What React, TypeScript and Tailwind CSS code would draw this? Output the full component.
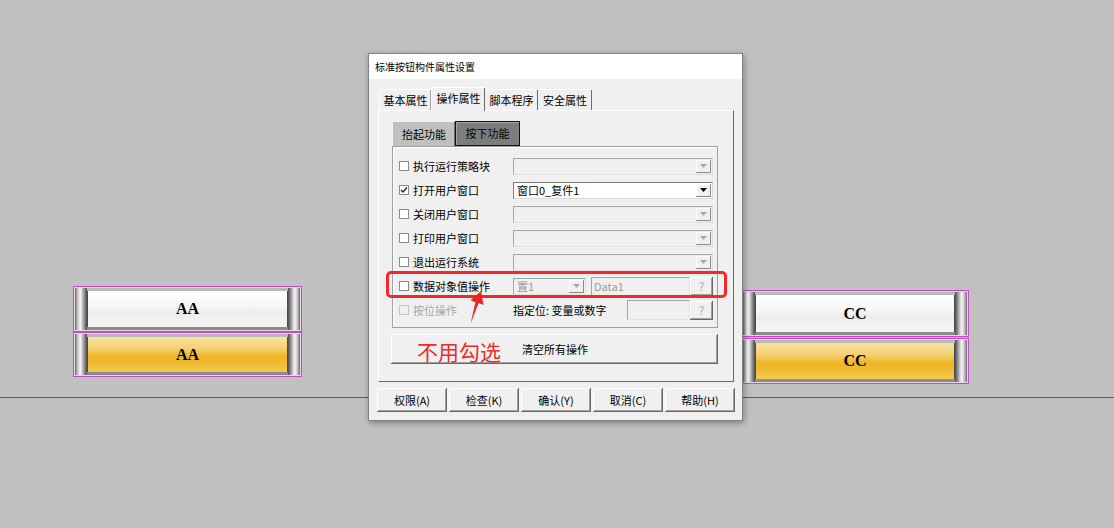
const cjk = "font-['Noto_Sans_CJK_SC','Noto_Sans',sans-serif]"

function MetalButton({ label, gold, h }: { label: string; gold?: boolean; h: string }) {
  return (
    <div className={`${h} border border-[#c848c8] bg-[#e9d3e9] p-px`}>
      <div className="flex h-full bg-[linear-gradient(180deg,#bcbcbc,#8a8a8a)]">
        <div className="w-[12px] bg-[linear-gradient(90deg,#6a6a6a_0%,#cfcfcf_25%,#f5f5f5_45%,#a8a8a8_70%,#4c4c4c_100%)]" />
        <div
          className={
            gold
              ? "my-[3px] flex flex-1 items-center justify-center border-x border-[#4a4a4a] bg-[linear-gradient(180deg,#f9e3a4_0%,#f4cf6e_35%,#efb524_55%,#f0bb32_75%,#f4c952_100%)] font-['Liberation_Serif',serif] text-[16px] font-bold text-black"
              : "my-[3px] flex flex-1 items-center justify-center border-x border-[#4a4a4a] bg-[linear-gradient(180deg,#ffffff_0%,#f7f7f7_40%,#ececec_60%,#f6f6f6_100%)] font-['Liberation_Serif',serif] text-[16px] font-bold text-black"
          }
        >
          {label}
        </div>
        <div className="w-[12px] bg-[linear-gradient(90deg,#4c4c4c_0%,#a8a8a8_30%,#f5f5f5_55%,#cfcfcf_75%,#6a6a6a_100%)]" />
      </div>
    </div>
  )
}

function CheckBox({ checked, disabled }: { checked?: boolean; disabled?: boolean }) {
  return (
    <div
      className={
        disabled
          ? 'flex h-[10px] w-[10px] shrink-0 items-center justify-center border border-[#c4c4c4] bg-[#f0f0f0]'
          : 'flex h-[10px] w-[10px] shrink-0 items-center justify-center border border-[#8a8a8a] bg-white'
      }
    >
      {checked && (
        <svg width="8" height="8" viewBox="0 0 8 8">
          <polyline points="1,4 3,6 7,1.5" fill="none" stroke="#222" strokeWidth="1.4" />
        </svg>
      )}
    </div>
  )
}

function Arrow({ enabled }: { enabled?: boolean }) {
  return (
    <div className="flex h-full w-[15px] items-center justify-center bg-[#f0f0f0] shadow-[inset_-1px_-1px_#8a8a8a,inset_1px_1px_#ffffff]">
      <svg width="7" height="4" viewBox="0 0 7 4">
        <polygon points="0,0 7,0 3.5,4" fill={enabled ? '#000' : '#a8a8a8'} />
      </svg>
    </div>
  )
}

function Combo({ w, text, enabled }: { w: string; text?: string; enabled?: boolean }) {
  return (
    <div
      className={
        enabled
          ? `${w} flex h-[17px] items-center border border-[#7a7a7a] border-r-[#d8d8d8] border-b-[#d8d8d8] bg-white p-px`
          : `${w} flex h-[17px] items-center border border-[#a6a6a6] border-r-[#e2e2e2] border-b-[#e2e2e2] bg-[#f0f0f0] p-px`
      }
    >
      <div className={enabled ? 'flex-1 pl-[2px] text-[11px] leading-[14px] text-black' : 'flex-1 pl-[2px] text-[11px] leading-[14px] text-[#9a9a9a]'}>
        {text}
      </div>
      <Arrow enabled={enabled} />
    </div>
  )
}

function QButton() {
  return (
    <div className="flex h-[19px] w-[23px] items-center justify-center bg-[#f0f0f0] text-[11px] text-[#a8a8a8] shadow-[inset_-1px_-1px_#696969,inset_1px_1px_#ffffff,inset_-2px_-2px_#a0a0a0]">
      ?
    </div>
  )
}

const rows = [
  { label: '执行运行策略块' },
  { label: '打开用户窗口', checked: true, value: '窗口0_复件1', enabled: true },
  { label: '关闭用户窗口' },
  { label: '打印用户窗口' },
  { label: '退出运行系统' },
]

function DialogButton({ children }: { children: string }) {
  return (
    <div className="flex h-[24px] w-[70px] items-center justify-center bg-[#f0f0f0] text-[11px] text-black shadow-[inset_-1px_-1px_#696969,inset_1px_1px_#ffffff,inset_-2px_-2px_#a0a0a0]">
      {children}
    </div>
  )
}

export default function App() {
  return (
    <div className={`relative h-[528px] w-[1114px] overflow-hidden bg-[#c0c0c0] ${cjk}`}>
      {/* canvas guide line */}
      <div className="absolute left-0 top-[397px] h-px w-full bg-[#5a5a5a]" />

      {/* AA widget */}
      <div className="absolute left-[73px] top-[286px] flex w-[229px] flex-col">
        <MetalButton label="AA" h="h-[46px]" />
        <MetalButton label="AA" gold h="h-[45px]" />
      </div>

      {/* CC widget */}
      <div className="absolute left-[741px] top-[290px] flex w-[228px] flex-col gap-px">
        <MetalButton label="CC" h="h-[47px]" />
        <MetalButton label="CC" gold h="h-[46px]" />
      </div>

      {/* property dialog */}
      <div className="absolute left-[368px] top-[53px] z-10 flex h-[368px] w-[375px] flex-col border border-[#828282] bg-[#f0f0f0] shadow-[1px_2px_6px_rgba(0,0,0,0.35)]">
        <div className="h-[25px] shrink-0 bg-white pl-[6px] text-[10px] leading-[25px] text-black">标准按钮构件属性设置</div>

        <div className="flex flex-col pl-[9px] pt-[8px]">
          <div className="flex h-[23px] items-end pl-px text-[11px] text-black">
            <div className="flex h-[21px] w-[52px] items-center justify-center border-l border-t border-white shadow-[inset_-1px_0_#a0a0a0]">基本属性</div>
            <div className="relative z-10 mb-[-1px] flex h-[24px] w-[54px] items-center justify-center border-l border-t border-white bg-[#f0f0f0] pb-[2px] shadow-[inset_-1px_0_#696969]">操作属性</div>
            <div className="flex h-[21px] w-[53px] items-center justify-center border-t border-white shadow-[inset_-1px_0_#696969]">脚本程序</div>
            <div className="flex h-[21px] w-[54px] items-center justify-center border-t border-white shadow-[inset_-1px_0_#696969]">安全属性</div>
          </div>

          <div className="flex h-[272px] w-[356px] flex-col border border-white border-b-[#696969] border-r-[#696969] pl-[13px] pt-[10px]">
            <div className="flex h-[25px] text-[11px] text-black">
              <div className="flex w-[63px] items-center justify-center border-l border-t border-[#f4f4f4] bg-[#c0c0c0] shadow-[inset_-1px_0_#6e6e6e]">抬起功能</div>
              <div className="flex w-[65px] items-center justify-center border border-[#111] bg-[#7d7d7d] shadow-[inset_1px_1px_#a5a5a5]">按下功能</div>
            </div>

            <div className="flex h-[182px] w-[326px] flex-col border border-[#a0a0a0] pb-[5px] pl-[6px] pt-[7px] shadow-[inset_1px_1px_#ffffff]">
              {rows.map((r) => (
                <div key={r.label} className="flex h-[24px] items-center">
                  <CheckBox checked={r.checked} />
                  <div className="ml-[4px] w-[100px] text-[11px] text-black">{r.label}</div>
                  <Combo w="w-[200px]" text={r.value} enabled={r.enabled} />
                </div>
              ))}
              <div className="flex h-[24px] items-center">
                <CheckBox />
                <div className="ml-[4px] w-[100px] text-[11px] text-black">数据对象值操作</div>
                <Combo w="w-[73px]" text="置1" />
                <div className="ml-[5px] flex h-[19px] w-[99px] items-center border border-[#a6a6a6] border-b-[#e2e2e2] border-r-[#e2e2e2] pl-[2px] text-[11px] text-[#9a9a9a]">Data1</div>
                <QButton />
              </div>
              <div className="flex h-[24px] items-center">
                <CheckBox disabled />
                <div className="ml-[4px] w-[100px] text-[11px] text-[#a6a6a6]">按位操作</div>
                <div className="w-[114px] text-[11px] text-black">指定位: 变量或数字</div>
                <div className="h-[20px] w-[63px] border border-[#a6a6a6] border-b-[#e2e2e2] border-r-[#e2e2e2]" />
                <QButton />
              </div>
            </div>

            <div className="-ml-px mt-[6px] flex h-[30px] w-[327px] items-center bg-[#f0f0f0] pl-[131px] text-[11px] text-black shadow-[inset_-1px_-1px_#696969,inset_1px_1px_#ffffff,inset_-2px_-2px_#a0a0a0]">
              清空所有操作
            </div>
          </div>

          <div className="-ml-px mt-[6px] flex gap-[2px]">
            <DialogButton>权限(A)</DialogButton>
            <DialogButton>检查(K)</DialogButton>
            <DialogButton>确认(Y)</DialogButton>
            <DialogButton>取消(C)</DialogButton>
            <DialogButton>帮助(H)</DialogButton>
          </div>
        </div>
      </div>

      {/* annotations */}
      <div className="absolute left-[386px] top-[271px] z-20 h-[27px] w-[341px] rounded-[5px] border-[3px] border-[#ee2a2a]" />
      <svg className="absolute left-[462px] top-[288px] z-20" width="26" height="40" viewBox="0 0 26 40">
        <polygon points="19,3 21.5,17 16.6,15 8.5,36 13.4,14.2 8.5,12.3" fill="#ee2424" />
      </svg>
      <div className="absolute left-[417px] top-[339px] z-20 text-[21px] leading-[24px] text-[#ee2a2a]">不用勾选</div>
    </div>
  )
}
